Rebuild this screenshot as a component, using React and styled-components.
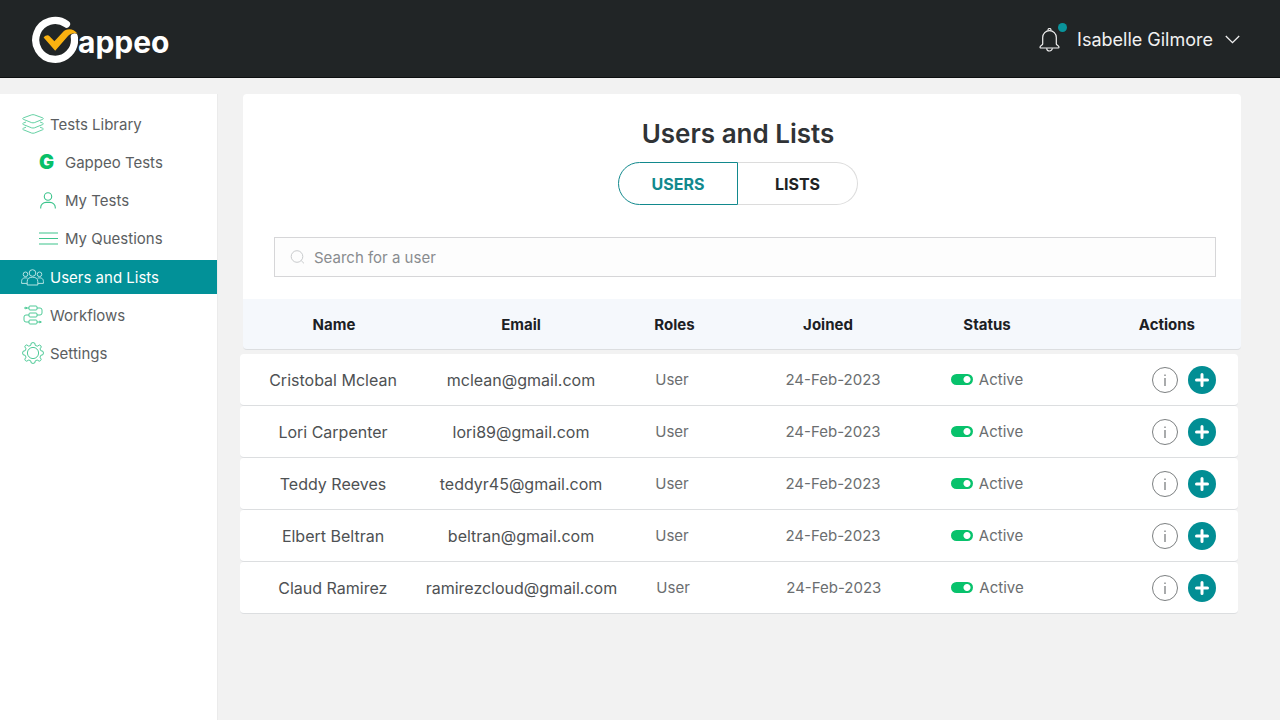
import React, { useState } from "react";
import styled, { createGlobalStyle, css } from "styled-components";

const GlobalStyle = createGlobalStyle`
    * {
        box-sizing: border-box;
    }
    body {
        margin: 0;
        background: #f2f2f2;
        color: #55585b;
        font-family: Inter, "Open Sans", sans-serif;
        font-size: 15px;
    }
    button, input {
        font: inherit;
        color: inherit;
    }
`;

const Page = styled.div`
    min-height: 100vh;
    display: flex;
    flex-direction: column;
`;

// Header

const TopBar = styled.header`
    display: flex;
    align-items: center;
    justify-content: space-between;
    height: 78px;
    padding: 2px 40px 0 31px;
    background: #212526;
    border-bottom: 1px solid #0d0f10;
`;

const Logo = styled.a`
    display: flex;
    align-items: center;
    color: #fff;
    text-decoration: none;
`;

const LogoText = styled.span`
    font-size: 30px;
    font-weight: 700;
    line-height: 36px;
    padding-top: 4px;
`;

const UserArea = styled.div`
    display: flex;
    align-items: center;
    gap: 17px;
    color: #f1f1f1;
`;

const BellButton = styled.button`
    position: relative;
    display: flex;
    padding: 0;
    border: 0;
    background: none;
`;

const Dot = styled.span`
    position: absolute;
    top: -5px;
    right: -7px;
    width: 9px;
    height: 9px;
    border-radius: 50%;
    background: #0a949b;
`;

const UserButton = styled.button`
    display: flex;
    align-items: center;
    gap: 12px;
    padding: 0;
    border: 0;
    background: none;
    font-size: 18px;
    line-height: 24px;
`;

// Sidebar

const Body = styled.div`
    flex: 1;
    display: flex;
    gap: 22px;
    padding-top: 16px;
`;

const Sidebar = styled.nav`
    flex: 0 0 218px;
    padding-top: 13px;
    background: #fff;
    border-right: 1px solid #ebebeb;
`;

const MenuList = styled.ul`
    display: flex;
    flex-direction: column;
    gap: 4px;
    margin: 0;
    padding: 0;
    list-style: none;
`;

const SubList = styled(MenuList)`
    padding: 4px 0 1px;
`;

const MenuLink = styled.a`
    display: flex;
    align-items: center;
    gap: ${props => (props.$sub ? "7px" : "6px")};
    height: 34px;
    padding-left: ${props => (props.$sub ? "38px" : "21px")};
    color: #5b5e61;
    text-decoration: none;
    svg {
        color: #3cc48c;
    }
    ${props => props.$active && css`
        background: #029198;
        color: #fff;
        svg {
            color: #b5e3e2;
        }
    `}
`;

const IconBox = styled.span`
    display: flex;
    justify-content: center;
    width: ${props => (props.$sub ? "20px" : "23px")};
`;

const LetterMark = styled.span`
    padding-right: 3px;
    color: #08c068;
    font-size: 20px;
    font-weight: 900;
    line-height: 20px;
`;

// Content

const Main = styled.main`
    flex: 1;
    min-width: 0;
    padding-right: 39px;
`;

const Card = styled.section`
    margin-left: 3px;
    padding: 24px 25px 22px 31px;
    border-radius: 4px 4px 0 0;
    background: #fff;
`;

const CardHead = styled.div`
    display: flex;
    flex-direction: column;
    align-items: center;
    gap: 12px;
    padding-right: 14px;
`;

const Title = styled.h1`
    margin: 0;
    color: #303336;
    font-size: 26px;
    font-weight: 600;
    line-height: 32px;
`;

const Tabs = styled.div`
    display: flex;
`;

const Tab = styled.button`
    width: 120px;
    height: 43px;
    padding: 0;
    border: 1px solid ${props => (props.$active ? "#12898d" : "#dcdcdc")};
    background: #fff;
    color: ${props => (props.$active ? "#12898d" : "#202224")};
    font-size: 16px;
    font-weight: 700;
    &:first-child {
        border-radius: 22px 0 0 22px;
    }
    &:last-child {
        border-radius: 0 22px 22px 0;
    }
    &:last-child:not([aria-selected="true"]) {
        border-left: 0;
    }
    &:first-child:not([aria-selected="true"]) {
        border-right: 0;
    }
`;

const SearchBox = styled.label`
    display: flex;
    align-items: center;
    gap: 9px;
    height: 40px;
    margin-top: 32px;
    padding: 0 15px;
    border: 1px solid #d6d6d8;
    background: #fdfdfd;
    color: #c9cbcd;
`;

const SearchInput = styled.input`
    flex: 1;
    min-width: 0;
    padding: 0;
    border: 0;
    outline: 0;
    background: none;
    color: #55585b;
    &::placeholder {
        color: #898c8f;
        opacity: 1;
    }
`;

const Table = styled.table`
    display: block;
`;

const THead = styled.thead`
    display: block;
    margin: 0 0 4px 3px;
`;

const TBody = styled.tbody`
    display: block;
    margin-right: 3px;
`;

const Row = styled.tr`
    display: grid;
    grid-template-columns: 186fr 190fr 112fr 210fr 98fr 202fr;
    align-items: center;
    height: 52px;
    border-bottom: 1px solid #dcdee0;
    border-radius: 4px;
    background: #fff;
`;

const HeadRow = styled(Row)`
    grid-template-columns: 182fr 192fr 115fr 192fr 126fr 191fr;
    height: 51px;
    border-radius: 0 0 4px 4px;
    background: #f5f8fc;
`;

const Th = styled.th`
    padding: 0;
    color: #1c2024;
    font-weight: 700;
    text-align: center;
    &:last-child {
        padding-right: 46px;
        text-align: right;
    }
`;

const Td = styled.td`
    padding: 0;
    color: ${props => (props.$light ? "#6b6e70" : "#4e5153")};
    font-size: ${props => (props.$light ? "15px" : "16px")};
    text-align: center;
    white-space: nowrap;
`;

const StatusLabel = styled.label`
    display: inline-flex;
    align-items: center;
    gap: 6px;
`;

const Toggle = styled.input`
    appearance: none;
    width: 22px;
    height: 11px;
    margin: 0;
    border-radius: 6px;
    background: radial-gradient(circle at 5px 50%, #fff 3px, #b9bcbe 4px);
    &:checked {
        background: radial-gradient(circle at 16px 50%, #fff 3px, #08c26c 4px);
    }
`;

const Actions = styled.div`
    display: flex;
    align-items: center;
    justify-content: flex-end;
    gap: 10px;
    padding-right: 22px;
`;

const RoundButton = styled.button`
    display: flex;
    align-items: center;
    justify-content: center;
    padding: 0;
    border-radius: 50%;
`;

const InfoButton = styled(RoundButton)`
    width: 26px;
    height: 26px;
    border: 1px solid #7c7f81;
    background: #fff;
    color: #7c7f81;
`;

const AddButton = styled(RoundButton)`
    width: 28px;
    height: 28px;
    border: 0;
    background: #028e94;
    color: #fff;
`;

// Icons

const LogoMark = () => (
    <svg width="47" height="48" viewBox="31 16 47 48" fill="none" aria-hidden="true">
        <path d="M66.5 24.2A19.4 19.4 0 1 0 74.3 37" stroke="#fff" strokeWidth="7.2" strokeLinecap="round" />
        <path
            d="M43.6 37.6C45.5 35.4 48 34.6 49.3 36L54.4 41.2L62.5 32.4C66 28.6 72.8 27.4 77.6 33.8C73.8 32.8 70.6 33.3 68 36L55.2 50.8Z"
            fill="#f9b110"
        />
    </svg>
);

const BellIcon = () => (
    <svg width="21" height="24" viewBox="0 0 21 24" fill="none" stroke="currentColor" strokeWidth="1.2" aria-hidden="true">
        <path d="M9 2.6V2a1.5 1.5 0 0 1 3 0v.6" />
        <path d="M3.7 16V9.4a6.8 6.8 0 0 1 13.6 0V16c0 1.2 2.7 1.6 2.7 3.2 0 .5-.4.8-.9.8H1.9c-.5 0-.9-.3-.9-.8C1 17.6 3.7 17.2 3.7 16Z" />
        <path d="M7.7 20.2a2.8 2.8 0 0 0 5.6 0" />
    </svg>
);

const ChevronIcon = () => (
    <svg width="15" height="9" viewBox="0 0 15 9" fill="none" stroke="currentColor" strokeWidth="1.3" aria-hidden="true">
        <path d="M.8 1L7.5 7.7L14.2 1" />
    </svg>
);

const LayersIcon = () => (
    <svg width="23" height="20" viewBox="-1 0 23 20" fill="none" stroke="currentColor" strokeWidth=".8" strokeLinejoin="round" aria-hidden="true">
        <path d="M9.5.9Q11 .4 12.5.9L20.500 3.800Q22.300 4.600 20.500 5.400L12.500 8.600Q11 9.100 9.500 8.600L1.500 5.400Q-.3 4.600 1.500 3.800Z" />
        <path d="M4 8L1.500 9Q-.3 9.800 1.500 10.600L9.500 13.800Q11 14.300 12.500 13.800L20.500 10.600Q22.300 9.800 20.500 9L18 8" />
        <path d="M4 13.200L1.500 14.200Q-.3 15 1.500 15.800L9.500 19Q11 19.500 12.500 19L20.500 15.800Q22.300 15 20.500 14.200L18 13.200" />
    </svg>
);

const PersonIcon = () => (
    <svg width="16" height="17" viewBox="0 0 16 17" fill="none" stroke="currentColor" strokeWidth="1.1" aria-hidden="true">
        <circle cx="8" cy="4.500" r="3.700" />
        <path d="M.7 16.500V15.600C.7 12.700 3.200 10.400 6 10.400H10C12.800 10.400 15.300 12.700 15.300 15.600V16.500" />
    </svg>
);

const LinesIcon = () => (
    <svg width="19" height="13" viewBox="0 0 19 13" stroke="currentColor" strokeWidth="1.2" aria-hidden="true">
        <path d="M0 1H19M0 6.500H19M0 12H19" />
    </svg>
);

const PeopleIcon = () => (
    <svg width="23" height="17" viewBox="0 0 23 17" fill="none" stroke="currentColor" strokeWidth="1" strokeLinejoin="round" aria-hidden="true">
        <circle cx="11.500" cy="4" r="3.300" />
        <path d="M6.200 16V12.500C6.200 9.800 8 8.200 11.500 8.200S16.800 9.800 16.800 12.500V16Z" />
        <circle cx="4.500" cy="5.300" r="2.300" />
        <circle cx="18.500" cy="5.300" r="2.300" />
        <path d="M6.500 9.200C3 8.200.6 9.400.6 12.400V14.400H6M16.500 9.200C20 8.200 22.400 9.400 22.400 12.400V14.400H17" />
    </svg>
);

const WorkflowIcon = () => (
    <svg width="20" height="20" viewBox="0 0 20 20" fill="none" stroke="currentColor" strokeWidth=".9" aria-hidden="true">
        <rect x="6" y="1" width="8" height="4" rx="1" />
        <rect x="6" y="8" width="8" height="4" rx="1" />
        <rect x="6" y="15" width="8" height="4" rx="1" />
        <path d="M1 3H6M14 3H17Q19 3 19 5V8Q19 10 17 10H14M6 10H3Q1 10 1 12V15Q1 17 3 17H6M14 17H18.500" />
        <path d="M2.500 1.500V4.500L4.500 3ZM16.500 15.500L18.500 17L16.500 18.500Z" fill="currentColor" stroke="none" />
    </svg>
);

const GearIcon = () => (
    <svg width="22" height="22" viewBox="0 0 22 22" fill="none" stroke="currentColor" strokeWidth=".9" strokeLinejoin="round" aria-hidden="true">
        <circle cx="11" cy="11" r="5.600" />
        <path d="M9.300 1Q11 .2 12.700 1L13.300 3.400L15.300 4.200L17.500 3Q19.200 3.500 19.300 5L18 6.900L18.800 8.700L21 9.300Q21.900 11 21 12.700L18.800 13.300L18 15.200L19.200 17.300Q18.800 19 17.200 19.200L15.200 18L13.300 18.800L12.700 21Q11 21.800 9.300 21L8.700 18.800L6.800 18L4.700 19.200Q3 18.900 2.800 17.200L4 15.200L3.200 13.300L1 12.700Q.2 11 1 9.300L3.200 8.700L4 6.800L2.800 4.800Q3.100 3.100 4.700 2.900L6.800 4.200L8.700 3.400Z" />
    </svg>
);

const SearchIcon = () => (
    <svg width="15" height="14" viewBox="0 0 15 14" fill="none" stroke="currentColor" strokeWidth="1" aria-hidden="true">
        <circle cx="7" cy="6.500" r="5.800" />
        <path d="M11.200 10.600L14 13.400" />
    </svg>
);

const InfoIcon = () => (
    <svg width="4" height="12" viewBox="0 0 4 12" stroke="currentColor" strokeWidth="1.3" aria-hidden="true">
        <path d="M2 .5V2M2 4V12" />
    </svg>
);

const PlusIcon = () => (
    <svg width="14" height="14" viewBox="0 0 14 14" stroke="currentColor" strokeWidth="3" strokeLinecap="round" aria-hidden="true">
        <path d="M7 1.500V12.500M1.500 7H12.500" />
    </svg>
);

const testLinks = [
    { label: "Gappeo Tests", icon: <LetterMark aria-hidden="true">G</LetterMark> },
    { label: "My Tests", icon: <PersonIcon /> },
    { label: "My Questions", icon: <LinesIcon /> },
];

const menu = [
    { label: "Tests Library", icon: <LayersIcon />, children: testLinks },
    { label: "Users and Lists", icon: <PeopleIcon />, active: true },
    { label: "Workflows", icon: <WorkflowIcon /> },
    { label: "Settings", icon: <GearIcon /> },
];

const users = [
    { name: "Cristobal Mclean", email: "mclean@gmail.com" },
    { name: "Lori Carpenter", email: "lori89@gmail.com" },
    { name: "Teddy Reeves", email: "teddyr45@gmail.com" },
    { name: "Elbert Beltran", email: "beltran@gmail.com" },
    { name: "Claud Ramirez", email: "ramirezcloud@gmail.com" },
];

const MenuItem = ({ label, icon, active, sub, children }) => (
    <li>
        <MenuLink href="#" $sub={sub} $active={active} aria-current={active ? "page" : undefined}>
            <IconBox $sub={sub}>{icon}</IconBox>
            {label}
        </MenuLink>
        {children && (
            <SubList>
                {children.map(item => <MenuItem key={item.label} {...item} sub />)}
            </SubList>
        )}
    </li>
);

const UserRow = ({ name, email }) => (
    <Row>
        <Td>{name}</Td>
        <Td>{email}</Td>
        <Td $light>User</Td>
        <Td $light>24-Feb-2023</Td>
        <Td $light>
            <StatusLabel>
                <Toggle type="checkbox" defaultChecked />
                Active
            </StatusLabel>
        </Td>
        <Td>
            <Actions>
                <InfoButton type="button" aria-label={`About ${name}`}><InfoIcon /></InfoButton>
                <AddButton type="button" aria-label={`Add ${name}`}><PlusIcon /></AddButton>
            </Actions>
        </Td>
    </Row>
);

const App = () => {
    const [tab, setTab] = useState("USERS");

    return (
        <Page>
            <GlobalStyle />
            <TopBar>
                <Logo href="#" aria-label="Gappeo">
                    <LogoMark />
                    <LogoText>appeo</LogoText>
                </Logo>
                <UserArea>
                    <BellButton type="button" aria-label="Notifications">
                        <BellIcon />
                        <Dot />
                    </BellButton>
                    <UserButton type="button">
                        Isabelle Gilmore
                        <ChevronIcon />
                    </UserButton>
                </UserArea>
            </TopBar>
            <Body>
                <Sidebar>
                    <MenuList>
                        {menu.map(item => <MenuItem key={item.label} {...item} />)}
                    </MenuList>
                </Sidebar>
                <Main>
                    <Card>
                        <CardHead>
                            <Title>Users and Lists</Title>
                            <Tabs role="tablist">
                                {["USERS", "LISTS"].map(name => (
                                    <Tab
                                        key={name}
                                        type="button"
                                        role="tab"
                                        aria-selected={tab === name}
                                        $active={tab === name}
                                        onClick={() => setTab(name)}
                                    >
                                        {name}
                                    </Tab>
                                ))}
                            </Tabs>
                        </CardHead>
                        <SearchBox>
                            <SearchIcon />
                            <SearchInput type="text" aria-label="Search for a user" placeholder="Search for a user" />
                        </SearchBox>
                    </Card>
                    <Table>
                        <THead>
                            <HeadRow>
                                {["Name", "Email", "Roles", "Joined", "Status", "Actions"].map(label => (
                                    <Th key={label} scope="col">{label}</Th>
                                ))}
                            </HeadRow>
                        </THead>
                        <TBody>
                            {users.map(user => <UserRow key={user.email} {...user} />)}
                        </TBody>
                    </Table>
                </Main>
            </Body>
        </Page>
    );
};

export default App;
